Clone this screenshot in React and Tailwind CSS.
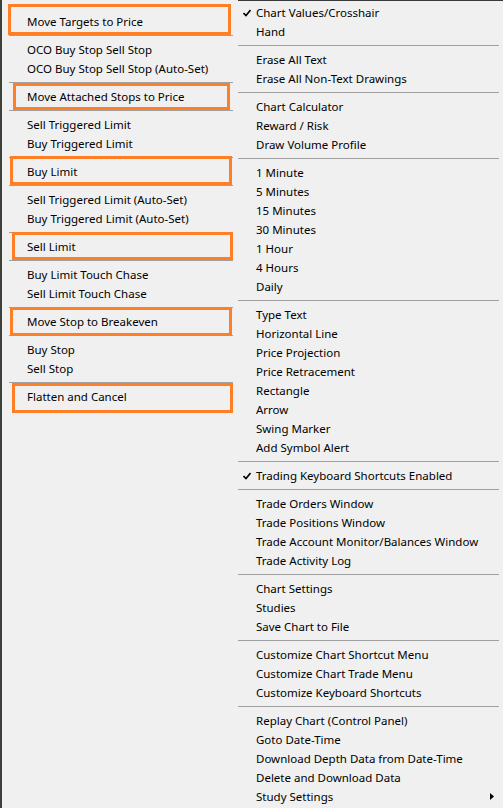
import React from 'react';

// Two-column chart context menu, with a few order actions boxed in orange.
const leftItems = [
  { label: 'Move Targets to Price', box: 'left-[6px] w-[223px] -top-[8px] h-[31px]' },
  '-',
  'OCO Buy Stop Sell Stop',
  'OCO Buy Stop Sell Stop (Auto-Set)',
  '-',
  { label: 'Move Attached Stops to Price', box: 'left-[11px] w-[217px] -top-[4px] h-[27px]' },
  '-',
  'Sell Triggered Limit',
  'Buy Triggered Limit',
  '-',
  { label: 'Buy Limit', box: 'left-[8px] w-[222px] -top-[6px] h-[29px]' },
  '-',
  'Sell Triggered Limit (Auto-Set)',
  'Buy Triggered Limit (Auto-Set)',
  '-',
  { label: 'Sell Limit', box: 'left-[10px] w-[221px] -top-[5px] h-[28px]' },
  '-',
  'Buy Limit Touch Chase',
  'Sell Limit Touch Chase',
  '-',
  { label: 'Move Stop to Breakeven', box: 'left-[8px] w-[222px] -top-[5px] h-[29px]' },
  '-',
  'Buy Stop',
  'Sell Stop',
  '-',
  { label: 'Flatten and Cancel', box: 'left-[10px] w-[221px] -top-[4px] h-[30px]' },
];

const rightItems = [
  { label: 'Chart Values/Crosshair', checked: true },
  'Hand',
  '-',
  'Erase All Text',
  'Erase All Non-Text Drawings',
  '-',
  'Chart Calculator',
  'Reward / Risk',
  'Draw Volume Profile',
  '-',
  '1 Minute',
  '5 Minutes',
  '15 Minutes',
  '30 Minutes',
  '1 Hour',
  '4 Hours',
  'Daily',
  '-',
  'Type Text',
  'Horizontal Line',
  'Price Projection',
  'Price Retracement',
  'Rectangle',
  'Arrow',
  'Swing Marker',
  'Add Symbol Alert',
  '-',
  { label: 'Trading Keyboard Shortcuts Enabled', checked: true },
  '-',
  'Trade Orders Window',
  'Trade Positions Window',
  'Trade Account Monitor/Balances Window',
  'Trade Activity Log',
  '-',
  'Chart Settings',
  'Studies',
  'Save Chart to File',
  '-',
  'Customize Chart Shortcut Menu',
  'Customize Chart Trade Menu',
  'Customize Keyboard Shortcuts',
  '-',
  'Replay Chart (Control Panel)',
  'Goto Date-Time',
  'Download Depth Data from Date-Time',
  'Delete and Download Data',
  { label: 'Study Settings', submenu: true },
];

const CheckMark = () => (
  <svg width="8" height="8" viewBox="0 0 8 8" className="absolute left-[5px] top-[6px]">
    <path d="M0.5 4 L3 6.5 L7.5 1" fill="none" stroke="#000" strokeWidth="1.6" />
  </svg>
);

const MenuColumn = ({ items, textPad, sepClass, className }) => (
  <div className={className}>
    {items.map((item, i) => {
      if (item === '-') {
        return (
          <div key={i} className="h-[9px] flex items-center">
            <div className={`h-px bg-[#a0a0a0] ${sepClass}`} />
          </div>
        );
      }
      const it = typeof item === 'string' ? { label: item } : item;
      return (
        <div key={i} className={`relative h-[19px] flex items-center ${textPad} whitespace-nowrap`}>
          {it.checked && <CheckMark />}
          <span>{it.label}</span>
          {it.submenu && (
            <svg width="4" height="7" viewBox="0 0 4 7" className="absolute right-[9px] top-[6px]">
              <path d="M0 0 L4 3.5 L0 7 Z" fill="#000" />
            </svg>
          )}
          {it.box && (
            <div className={`absolute ${it.box} border-[3px] border-[#ff7f27] pointer-events-none`} />
          )}
        </div>
      );
    })}
  </div>
);

export default function App() {
  return (
    <div
      className="w-[503px] h-[808px] overflow-hidden flex bg-[#f0f0f0] text-[11.5px] leading-none text-black"
      style={{ fontFamily: '"Noto Sans", "Open Sans", sans-serif' }}
    >
      <div className="w-[2px] shrink-0 bg-[#3b4039]" />
      <MenuColumn
        items={leftItems}
        textPad="pl-[25px]"
        sepClass="ml-[7px] w-[224px]"
        className="w-[236px] shrink-0 pt-[12px]"
      />
      <MenuColumn
        items={rightItems}
        textPad="pl-[18px]"
        sepClass="w-[261px]"
        className="flex-1 pt-[2px] border-t border-[#3a3a3a]"
      />
    </div>
  );
}
